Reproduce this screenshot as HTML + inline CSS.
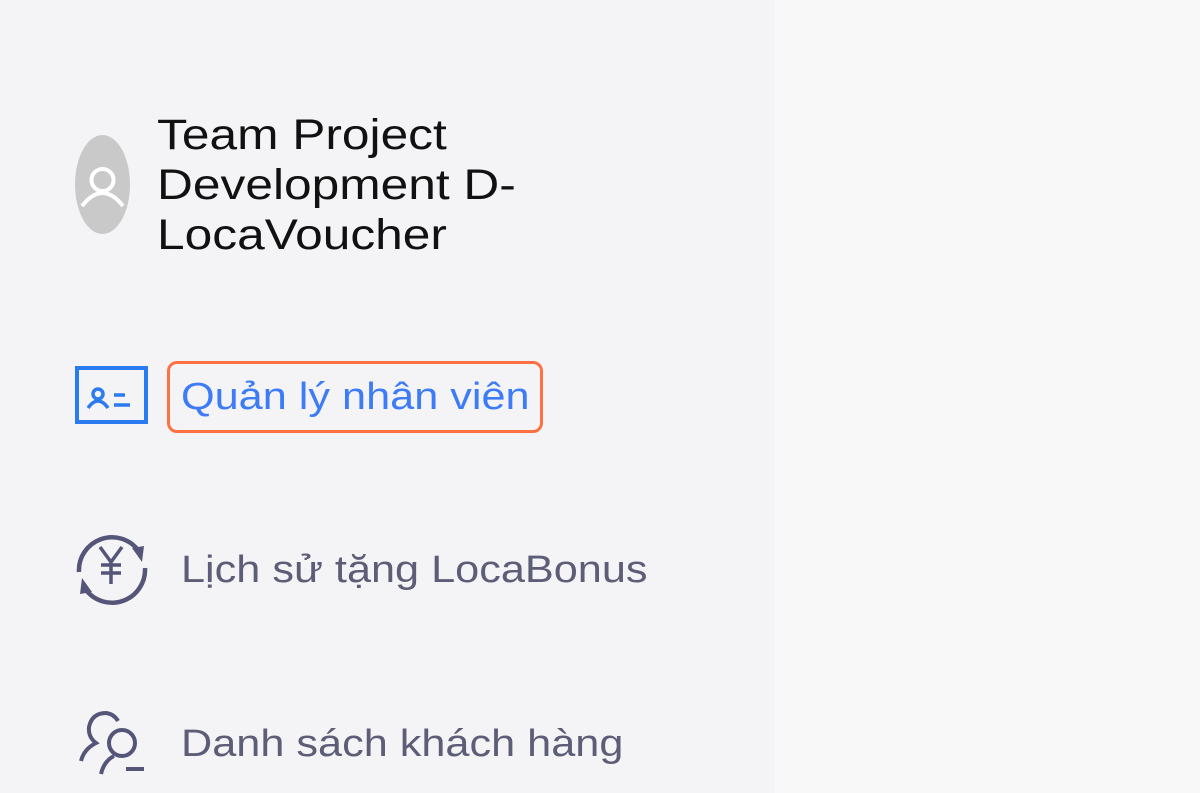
<!DOCTYPE html>
<html><head><meta charset="utf-8"><style>
body{margin:0;width:1200px;height:793px;background:#f8f8f9;font-family:"Liberation Sans",sans-serif;position:relative;overflow:hidden}
.side{position:absolute;left:0;top:0;width:775px;height:793px;background:#f4f4f6}
.t{position:absolute;left:157px;top:110px;font-size:43px;line-height:50px;color:#111;transform:scaleX(1.155);transform-origin:0 0;white-space:nowrap}
.av{position:absolute;left:75px;top:135px;width:55px;height:99px;border-radius:50%;background:#c9c9c9}
.m{position:absolute;left:181px;font-size:38px;color:#5d5d78;transform:scaleX(1.138);transform-origin:0 0;white-space:nowrap}
.box{position:absolute;left:167px;top:361px;width:370px;height:66px;border:3px solid #ff7043;border-radius:10px}
</style></head><body>
<div class="side"></div>
<div class="av"><svg width="55" height="99" viewBox="0 0 55 99"><circle cx="27.5" cy="45" r="11" fill="none" stroke="#fff" stroke-width="4"/><path d="M7 71 Q27.5 45 48 71" fill="none" stroke="#fff" stroke-width="4"/></svg></div>
<div class="t">Team Project<br>Development D-<br>LocaVoucher</div>
<svg style="position:absolute;left:74px;top:365px" width="75" height="60" viewBox="0 0 75 60"><rect x="3" y="3" width="69" height="54" fill="none" stroke="#2b7bf0" stroke-width="4"/><circle cx="24" cy="29" r="5" fill="none" stroke="#2b7bf0" stroke-width="3.5"/><path d="M14 43 Q24 29 34 43" fill="none" stroke="#2b7bf0" stroke-width="3.5"/><path d="M40 30h11M40 40h16" stroke="#2b7bf0" stroke-width="3.5"/></svg>
<div class="box"></div>
<div class="m" style="top:376px;color:#3d7cf6">Quản lý nhân viên</div>
<svg style="position:absolute;left:74px;top:532px" width="76" height="76" viewBox="0 0 76 76"><path d="M5 40 A33 33 0 0 1 64 18" fill="none" stroke="#55557a" stroke-width="4.5"/><path d="M71 36 A33 33 0 0 1 12 58" fill="none" stroke="#55557a" stroke-width="4.5"/><path d="M58 16 L70 14 L68 30Z" fill="#55557a"/><path d="M18 60 L6 62 L8 46Z" fill="#55557a"/><path d="M26 15 L37 30 L48 15 M37 30 V52 M27 33 H47 M27 41 H47" fill="none" stroke="#55557a" stroke-width="3.5"/></svg>
<div class="m" style="top:549px">Lịch sử tặng LocaBonus</div>
<svg style="position:absolute;left:76px;top:705px" width="74" height="74" viewBox="0 0 74 74"><path d="M5 56 Q8 44 20 38 Q12 32 13 22 Q16 8 30 8 Q38 9 42 16" fill="none" stroke="#55557a" stroke-width="4"/><circle cx="46" cy="38" r="13" fill="none" stroke="#55557a" stroke-width="4"/><path d="M25 69 Q28 56 38 51" fill="none" stroke="#55557a" stroke-width="4"/><path d="M50 64 H68" stroke="#55557a" stroke-width="4"/></svg>
<div class="m" style="top:723px">Danh sách khách hàng</div>
</body></html>
